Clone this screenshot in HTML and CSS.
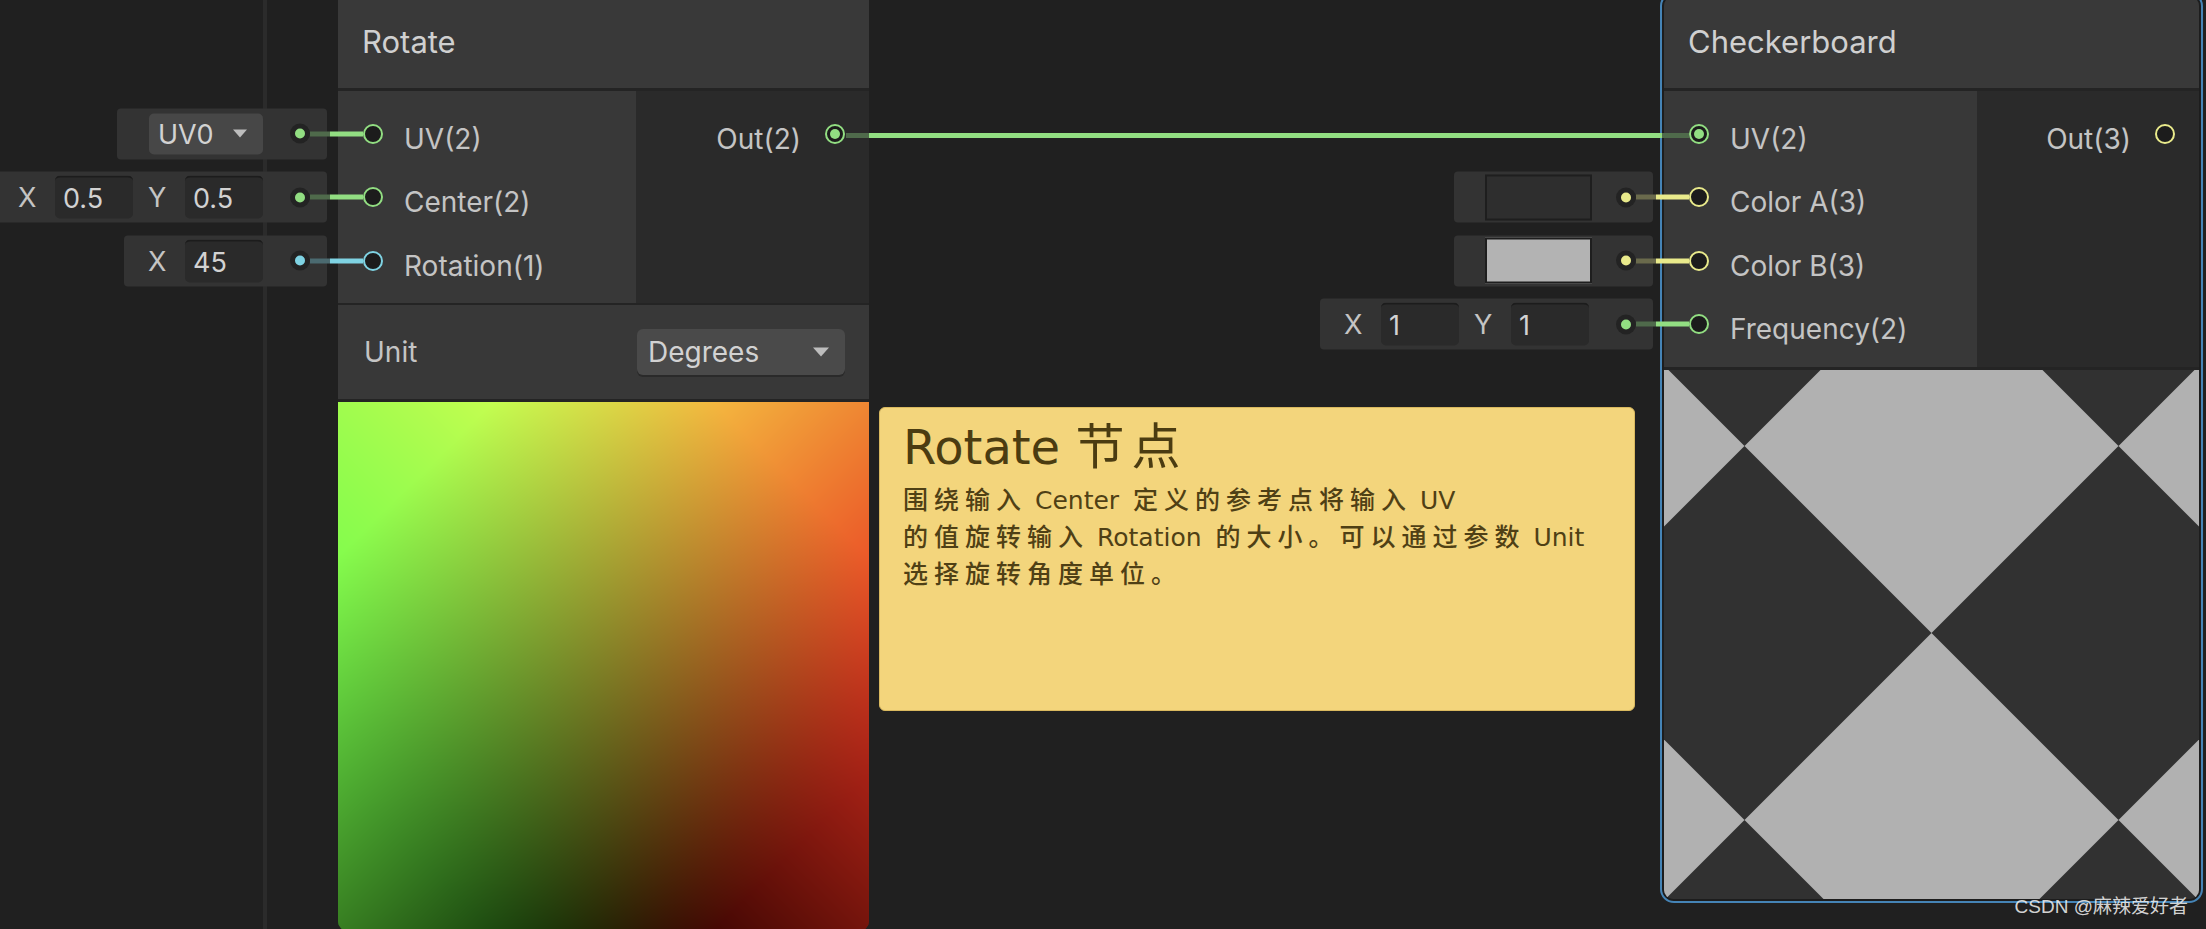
FILE: index.html
```html
<!DOCTYPE html>
<html lang="zh">
<head>
<meta charset="utf-8">
<title>Shader Graph</title>
<link rel="stylesheet" href="styles.css">
</head>
<body>
<div class="canvas">
  <div class="divider"></div>

  <!-- Rotate node -->
  <div class="node node-rotate">
    <div class="node-header"><span class="node-title">Rotate</span></div>
    <div class="node-body">
      <div class="col-in">
        <div class="port-row">
          <div class="inline green">
            <div class="ibox ibox-dd">
              <div class="dropdown dd-uv"><span>UV0</span><i class="arrow"></i></div>
              <span class="idot"></span><span class="dim"></span>
            </div>
            <span class="wire"></span>
          </div>
          <span class="port green"></span><span class="plabel">UV(2)</span>
        </div>
        <div class="port-row">
          <div class="inline green">
            <div class="ibox">
              <span class="vlabel">X</span><span class="field">0.5</span>
              <span class="vlabel">Y</span><span class="field">0.5</span>
              <span class="idot"></span><span class="dim"></span>
            </div>
            <span class="wire"></span>
          </div>
          <span class="port green"></span><span class="plabel">Center(2)</span>
        </div>
        <div class="port-row">
          <div class="inline cyan">
            <div class="ibox">
              <span class="vlabel">X</span><span class="field">45</span>
              <span class="idot"></span><span class="dim"></span>
            </div>
            <span class="wire"></span>
          </div>
          <span class="port cyan"></span><span class="plabel">Rotation(1)</span>
        </div>
      </div>
      <div class="col-out">
        <div class="port-row out">
          <span class="plabel">Out(2)</span><span class="port green connected"></span>
        </div>
      </div>
    </div>
    <div class="unit-row">
      <span class="plabel-plain">Unit</span>
      <div class="dropdown dd-unit"><span>Degrees</span><i class="arrow"></i></div>
    </div>
    <div class="preview preview-rotate">
      <canvas id="rotPreview" class="rot-canvas" width="531" height="529"></canvas>
    </div>
  </div>

  <!-- connection -->
  <div class="edge"></div>

  <!-- Sticky note -->
  <div class="sticky">
    <div class="sticky-title">Rotate <span class="cj">节点</span></div>
    <div class="sticky-text">
      <span class="cj">围绕输入</span> Center <span class="cj">定义的参考点将输入</span> UV<br>
      <span class="cj">的值旋转输入</span> Rotation <span class="cj">的大小。可以通过参数</span> Unit<br>
      <span class="cj">选择旋转角度单位。</span>
    </div>
  </div>

  <!-- Checkerboard node -->
  <div class="node node-checker">
    <div class="node-header"><span class="node-title">Checkerboard</span></div>
    <div class="node-body">
      <div class="col-in">
        <div class="port-row">
          <span class="port green connected"></span><span class="plabel">UV(2)</span>
        </div>
        <div class="port-row">
          <div class="inline yellow">
            <div class="ibox ibox-color">
              <span class="swatch swatch-dark"></span>
              <span class="idot"></span><span class="dim"></span>
            </div>
            <span class="wire"></span>
          </div>
          <span class="port yellow"></span><span class="plabel">Color A(3)</span>
        </div>
        <div class="port-row">
          <div class="inline yellow">
            <div class="ibox ibox-color">
              <span class="swatch swatch-light"></span>
              <span class="idot"></span><span class="dim"></span>
            </div>
            <span class="wire"></span>
          </div>
          <span class="port yellow"></span><span class="plabel">Color B(3)</span>
        </div>
        <div class="port-row">
          <div class="inline green">
            <div class="ibox">
              <span class="vlabel">X</span><span class="field">1</span>
              <span class="vlabel">Y</span><span class="field">1</span>
              <span class="idot"></span><span class="dim"></span>
            </div>
            <span class="wire"></span>
          </div>
          <span class="port green"></span><span class="plabel">Frequency(2)</span>
        </div>
      </div>
      <div class="col-out">
        <div class="port-row out">
          <span class="plabel">Out(3)</span><span class="port yellow"></span>
        </div>
      </div>
    </div>
    <div class="preview preview-checker">
      <svg class="checker-svg" width="535" height="529" viewBox="0 0 535 529">
        <rect x="0" y="0" width="535" height="529" fill="#313131"/>
        <g fill="#b1b1b1">
          <polygon points="267.5,-111 454.5,76 267.5,263 80.5,76"/>
          <polygon points="267.5,263 454.5,450 267.5,637 80.5,450"/>
          <polygon points="-106.5,-111 80.5,76 -106.5,263 -293.5,76"/>
          <polygon points="-106.5,263 80.5,450 -106.5,637 -293.5,450"/>
          <polygon points="641.5,-111 828.5,76 641.5,263 454.5,76"/>
          <polygon points="641.5,263 828.5,450 641.5,637 454.5,450"/>
        </g>
      </svg>
    </div>
  </div>

  <div class="watermark">CSDN @麻辣爱好者</div>
</div>
<script src="script.js"></script>
</body>
</html>
```

FILE: styles.css
```css
* { box-sizing: border-box; }
html, body { margin: 0; padding: 0; }
body {
  width: 2206px;
  height: 929px;
  overflow: hidden;
  background: #202020;
  font-family: Inter, "Noto Sans", "Liberation Sans", sans-serif;
}
.canvas {
  position: relative;
  width: 2206px;
  height: 929px;
  overflow: hidden;
  background: #202020;
}
.divider {
  position: absolute;
  left: 263px;
  top: 0;
  width: 4px;
  height: 100%;
  background: #2b2b2b;
}

/* colour themes */
.green  { --c: #92de82; --d: #4f6a4b; color: #92de82; }
.cyan   { --c: #7fd3e3; --d: #4b6a70; color: #7fd3e3; }
.yellow { --c: #e9ea8b; --d: #6a6a4c; color: #e9ea8b; }

/* nodes */
.node {
  position: absolute;
  z-index: 1;
  display: flex;
  flex-direction: column;
  font-size: 28px;
  color: #c4c4c4;
}
.node-rotate {
  left: 338px;
  top: 0;
  width: 531px;
}
.node-checker {
  left: 1662px;
  top: -6px;
  width: 539px;
  border: 2px solid #1d1d1d;
  border-radius: 12px;
  outline: 2px solid #4584b6;
  background: #262626;
}
.node-header {
  flex: none;
  height: 91px;
  background: #393939;
  border-bottom: 3px solid #242424;
  display: flex;
  align-items: center;
  padding: 0 0 6px 24px;
}
.node-checker .node-header {
  height: 95px;
  padding-top: 4px;
  border-radius: 10px 10px 0 0;
}
.node-title {
  font-size: 31px;
  color: #d0d0d0;
}
.node-body {
  flex: none;
  display: flex;
  height: 214px;
  border-bottom: 2px solid #242424;
}
.node-checker .node-body {
  height: 279px;
  border-bottom-width: 3px;
}
.col-in {
  width: 298px;
  background: #383838;
  padding-top: 11px;
}
.node-checker .col-in { width: 313px; }
.col-out {
  flex: 1;
  background: #2a2a2a;
  padding-top: 11px;
}
.port-row {
  position: relative;
  height: 63.5px;
  display: flex;
  align-items: center;
  padding-left: 25px;
}
.port-row.out {
  justify-content: flex-end;
  padding-left: 0;
  padding-right: 24px;
}
.port {
  flex: none;
  position: relative;
  width: 20px;
  height: 20px;
  border-radius: 50%;
  border: 2px solid var(--c);
  background: #1c1c1c;
}
.port.connected::after {
  content: "";
  position: absolute;
  left: 3px; top: 3px;
  width: 10px; height: 10px;
  border-radius: 50%;
  background: var(--c);
}
.plabel {
  margin-left: 21px;
  padding-top: 10px;
  color: #c4c4c4;
  white-space: nowrap;
}
.port-row.out .plabel {
  margin: 0 24px 0 0;
}
.plabel-plain { color: #c4c4c4; }

/* inline inputs */
.inline {
  position: absolute;
  right: calc(100% - 25px);
  top: 50%;
  transform: translateY(-50%);
  display: flex;
  align-items: center;
}
.ibox {
  display: flex;
  align-items: center;
  height: 51px;
  background: #333333;
  border-radius: 4px;
  padding-left: 24px;
  font-size: 27px;
}
.ibox-dd { padding-left: 32px; }
.ibox-color { padding-left: 31px; }
.vlabel {
  width: 18px;
  margin-right: 19px;
  color: #c4c4c4;
}
.field {
  width: 78px;
  height: 43px;
  margin-right: 15px;
  padding-left: 8px;
  display: flex;
  align-items: center;
  background: #2a2a2a;
  border-radius: 5px;
  border-top: 2px solid #1c1c1c;
  color: #d2d2d2;
}
.idot {
  flex: none;
  position: relative;
  width: 20px;
  height: 20px;
  margin-left: 12px;
  border-radius: 50%;
  background: #232323;
}
.idot::after {
  content: "";
  position: absolute;
  left: 5px; top: 5px;
  width: 10px; height: 10px;
  border-radius: 50%;
  background: var(--c);
}
.dim {
  width: 17px;
  height: 5px;
  background: var(--d);
}
.wire {
  width: 36px;
  height: 5px;
  background: linear-gradient(to right, var(--d) 0 3px, var(--c) 3px);
}
.swatch {
  width: 107px;
  height: 46px;
  margin-right: 12px;
  border: 2px solid #1e1e1e;
}
.swatch-dark { background: #2e2e2e; }
.swatch-light { background: #b3b3b3; }

/* dropdowns */
.dropdown {
  position: relative;
  display: flex;
  align-items: center;
  color: #d2d2d2;
  background: #474747;
  border-radius: 5px;
}
.dd-uv {
  width: 114px;
  height: 41px;
  padding-left: 9px;
  margin-right: 15px;
}
.dd-unit {
  width: 208px;
  height: 46px;
  padding-left: 11px;
  background: #4a4a4a;
  border-radius: 6px;
  box-shadow: 0 2px 0 #2a2a2a;
}
.arrow {
  position: absolute;
  right: 16px;
  top: 50%;
  width: 0;
  height: 0;
  border-left: 7px solid transparent;
  border-right: 7px solid transparent;
  border-top: 8px solid #bdbdbd;
  transform: translateY(-50%);
}
.dd-unit .arrow {
  border-left-width: 8px;
  border-right-width: 8px;
  border-top-width: 9px;
}

.unit-row {
  flex: none;
  height: 97px;
  display: flex;
  align-items: center;
  justify-content: space-between;
  padding: 0 24px 0 26px;
  background: #383838;
  border-bottom: 3px solid #242424;
}

/* previews */
.preview { flex: none; overflow: hidden; }
.preview-rotate {
  height: 529px;
  border-radius: 0 0 10px 10px;
  background:
    linear-gradient(45deg, #000 14.6%, #ea3323 85.4%),
    linear-gradient(-45deg, #000 14.6%, #75fb4c 85.4%);
  background-blend-mode: lighten;
}
.rot-canvas {
  display: block;
  width: 531px;
  height: 529px;
}
.preview-checker {
  height: 529px;
  border-radius: 0 0 9px 9px;
}
.checker-svg { display: block; }

/* edge */
.edge {
  position: absolute;
  z-index: 2;
  left: 846px;
  top: 132.5px;
  width: 843px;
  height: 5px;
  background: linear-gradient(to right, #4f6a4b 0 23px, #92de82 23px 816px, #4f6a4b 816px);
}

/* sticky note */
.sticky {
  position: absolute;
  z-index: 3;
  left: 879px;
  top: 407px;
  width: 756px;
  height: 304px;
  padding: 7px 23px;
  background: #f3d57c;
  border: 1px solid #d9b95f;
  border-radius: 6px;
  color: #4b3c11;
  font-family: "DejaVu Sans", "Noto Sans CJK SC", sans-serif;
}
.sticky-title {
  font-size: 48px;
  line-height: 56px;
  white-space: nowrap;
}
.sticky-title .cj {
  font-family: "Noto Sans CJK SC", sans-serif;
  font-size: 49px;
  letter-spacing: 7px;
}
.sticky-text {
  margin-top: 6px;
  font-size: 25px;
  line-height: 34px;
  white-space: nowrap;
  color: #4f4015;
}
.sticky-text .cj {
  font-family: "Noto Sans CJK SC", sans-serif;
  font-size: 25px;
  font-weight: 500;
  letter-spacing: 6px;
}
.sticky-text .cj + .cj {
  margin-left: 6px;
}

/* watermark */
.watermark {
  position: absolute;
  z-index: 4;
  right: 18px;
  bottom: 11px;
  font-family: "Liberation Sans", "Noto Sans CJK SC", sans-serif;
  font-size: 19px;
  line-height: 22px;
  color: rgba(235, 235, 235, 0.9);
}
```

FILE: script.js
```js
(function () {
  var cv = document.getElementById('rotPreview');
  if (!cv || !cv.getContext) return;
  var ctx = cv.getContext('2d');
  if (!ctx) return;
  var W = cv.width, H = cv.height;
  var img = ctx.createImageData(W, H);
  var d = img.data;
  var k = 1 / Math.SQRT2;
  function clamp(c) { return c < 0 ? 0 : (c > 1 ? 1 : c); }
  function toLin(c) { return c <= 0.04045 ? c / 12.92 : Math.pow((c + 0.055) / 1.055, 2.4); }
  function toS(c) { c = clamp(c); return c <= 0.0031308 ? 12.92 * c : 1.055 * Math.pow(c, 1 / 2.4) - 0.055; }
  for (var y = 0; y < H; y++) {
    var yu = 1 - (y + 0.5) / H;
    for (var x = 0; x < W; x++) {
      var xu = (x + 0.5) / W;
      var u = clamp(0.5 + ((xu - 0.5) + (yu - 0.5)) * k);
      var v = clamp(0.5 + (-(xu - 0.5) + (yu - 0.5)) * k);
      var r = toLin(u), g = toLin(v);
      var i = (y * W + x) * 4;
      d[i] = Math.round(toS(0.8225 * r + 0.1774 * g) * 255);
      d[i + 1] = Math.round(toS(0.0332 * r + 0.9669 * g) * 255);
      d[i + 2] = Math.round(toS(0.0171 * r + 0.0724 * g) * 255);
      d[i + 3] = 255;
    }
  }
  ctx.putImageData(img, 0, 0);
})();
```
